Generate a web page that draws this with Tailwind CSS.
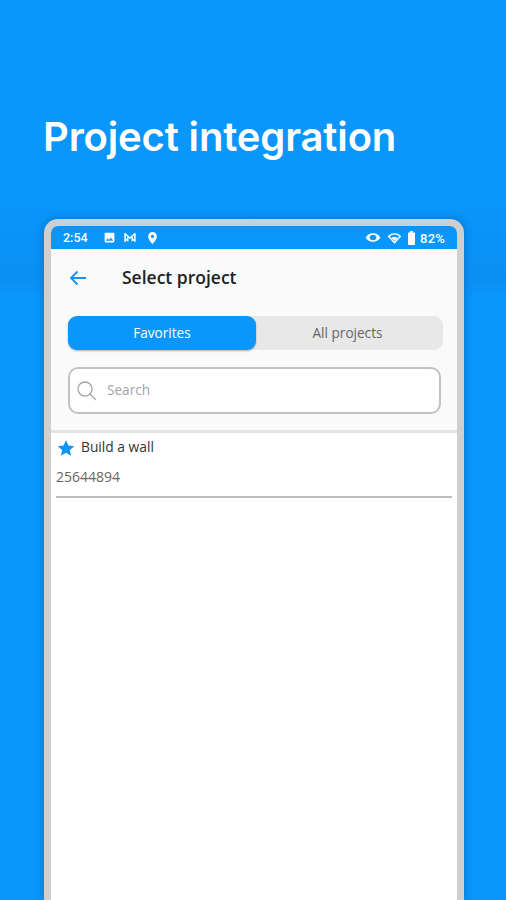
<!DOCTYPE html>
<html lang="en">
<head>
<meta charset="utf-8">
<title>Project integration</title>
<script src="https://cdn.jsdelivr.net/npm/@tailwindcss/browser@4"></script>
</head>
<body class="m-0">
<div class="w-[506px] h-[900px] overflow-hidden bg-[linear-gradient(180deg,#0a96fb_0,#0a96fb_190px,#0a90f3_280px,#0a97fb_300px,#0a96fb_100%)] flex flex-col font-['Open_Sans',sans-serif]">
  <h1 class="ml-[43px] mt-[112px] h-[50px] text-[40px] leading-[50px] font-semibold text-white font-['Inter',sans-serif] tracking-[-0.15px]">Project integration</h1>

  <!-- phone frame -->
  <div class="ml-[44px] mt-[57px] w-[420px] flex-1 flex flex-col border-[7px] border-b-0 border-[#cfcfcf] rounded-t-[14px] bg-white shadow-[0_0_9px_rgba(0,60,130,0.4)] overflow-hidden">
    <!-- status bar -->
    <div class="h-[23px] shrink-0 bg-[#0a96fb] flex items-center justify-between pl-[12px] pr-[12px] text-white">
      <div class="flex items-center">
        <span class="pt-[1px] text-[12.500px] font-medium leading-none w-[28px] font-['Roboto',sans-serif]">2:54</span>
        <svg class="ml-[12px] w-[13px] h-[13px]" viewBox="0 0 24 24" fill="white"><path d="M21 19V5a2 2 0 0 0-2-2H5a2 2 0 0 0-2 2v14a2 2 0 0 0 2 2h14a2 2 0 0 0 2-2zM8.500 13.500l2.500 3 3.500-4.500 4.500 6H5l3.500-4.500z"/></svg>
        <svg class="ml-[7px] w-[14px] h-[13px]" viewBox="0 0 24 24" fill="none" stroke="white" stroke-width="2.500"><path d="M3 4v16M21 4v16" stroke-width="3"/><path d="M3 5l9 8 9-8M8 11v8M16 11v8M3 19l5-5M21 19l-5-5"/></svg>
        <svg class="ml-[9px] w-[13px] h-[14px]" viewBox="0 0 24 24" fill="white"><path d="M12 1a8 8 0 0 0-8 8c0 6 8 14 8 14s8-8 8-14a8 8 0 0 0-8-8zm0 11a3 3 0 1 1 0-6 3 3 0 0 1 0 6z"/></svg>
      </div>
      <div class="flex items-center">
        <svg class="w-[16px] h-[13px]" viewBox="0 0 24 24" fill="white" preserveAspectRatio="none"><path d="M12 4C7 4 2.700 7.500 1 12c1.700 4.500 6 8 11 8s9.300-3.500 11-8c-1.700-4.500-6-8-11-8zm0 13a5 5 0 1 1 0-10 5 5 0 0 1 0 10z"/></svg>
        <svg class="ml-[6px] w-[15px] h-[14px]" viewBox="0 0 24 24" fill="none" stroke="white"><path d="M2 9c6-5 14-5 20 0l-10 11z" stroke-width="2.500" stroke-linejoin="round"/><path d="M7 11.500c3-2 7-2 10 0L12 17z" fill="white" stroke="none"/></svg>
        <svg class="ml-[5px] w-[9px] h-[14px]" viewBox="0 0 12 20" fill="white"><path d="M4 0h4v2h2a1 1 0 0 1 1 1v16a1 1 0 0 1-1 1H2a1 1 0 0 1-1-1V3a1 1 0 0 1 1-1h2z"/></svg>
        <span class="ml-[4px] pt-[1px] text-[13px] font-medium leading-none tracking-[0.2px] font-['Roboto',sans-serif]">82%</span>
      </div>
    </div>

    <!-- header area -->
    <div class="h-[184px] shrink-0 bg-[#fafafa] border-b-[3px] border-[#e4e4e4] flex flex-col">
      <div class="h-[57px] flex items-center shrink-0">
        <svg class="ml-[17px] w-[20px] h-[20px]" viewBox="0 0 20 20" fill="none" stroke="#1c8fe8" stroke-width="1.800"><path d="M18 10H3M9.500 3.500 3 10l6.500 6.500"/></svg>
        <span class="ml-[34px] text-[17.500px] font-semibold leading-none text-[#222]">Select project</span>
      </div>
      <div class="mt-[10px] ml-[17px] mr-[14px] h-[34px] flex rounded-[9px] bg-[#e8e8e8] text-[13.600px]">
        <div class="w-[188px] rounded-[9px] bg-[#0a96fb] text-white flex items-center justify-center shadow-[0_1px_2px_rgba(0,0,0,0.3)]">Favorites</div>
        <div class="flex-1 flex items-center justify-center pr-[4px] text-[#666]">All projects</div>
      </div>
      <div class="mt-[17px] ml-[17px] mr-[16px] h-[47px] rounded-[10px] border-2 border-[#c2c2c2] bg-white flex items-center">
        <svg class="ml-[6px] w-[21px] h-[21px]" viewBox="0 0 21 21" fill="none" stroke="#a5a5a5" stroke-width="1.300"><circle cx="9" cy="9" r="7"/><path d="m14 14 6 6"/></svg>
        <span class="ml-[10px] text-[13.600px] text-[#a3a3a3]">Search</span>
      </div>
    </div>

    <!-- list -->
    <div class="flex-1 bg-white px-[5px]">
      <div class="flex items-center h-[29px]">
        <svg class="ml-[1px] w-[18px] h-[18px]" viewBox="0 0 24 24" fill="#0a96fb"><path d="M12 1.500l3.200 7.200 7.800.8-5.900 5.200 1.700 7.700L12 18.400l-6.800 4 1.700-7.700L1 9.500l7.800-.8z"/></svg>
        <span class="ml-[6px] text-[13.800px] font-medium text-[#333]">Build a wall</span>
      </div>
      <div class="h-[36px] pt-[5px] text-[14px] leading-[20px] text-[#666] border-b-2 border-[#bdbdbd]">25644894</div>
    </div>
  </div>
</div>
</body>
</html>
